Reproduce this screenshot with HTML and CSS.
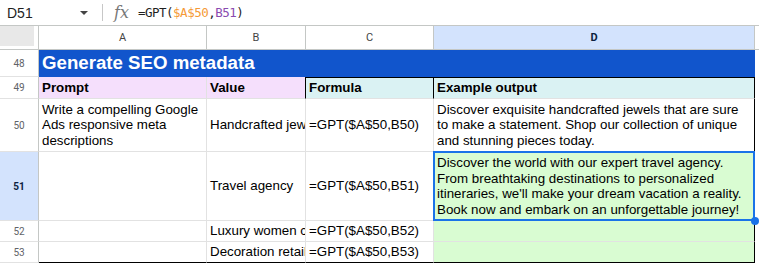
FILE: index.html
```html
<!DOCTYPE html>
<html lang="en">
<head>
    <meta charset="UTF-8">
    <meta name="viewport" content="width=device-width, initial-scale=1.0">
    <title>Generate SEO metadata</title>
    <link rel="stylesheet" href="styles.css">
</head>
<body>
    <div class="formula-bar">
        <div class="name-box">D51</div>
        <span class="dropdown"></span>
        <span class="divider"></span>
        <span class="fx">fx</span>
        <div class="formula">=GPT(<span class="ref-a">$A$50</span>,<span class="ref-b">B51</span>)</div>
    </div>

    <div class="sheet">
        <!-- column headers -->
        <div class="corner"><span></span></div>
        <div class="ch">A</div>
        <div class="ch">B</div>
        <div class="ch">C</div>
        <div class="ch active">D</div>
        <div class="ch filler"></div>

        <!-- 48 -->
        <div class="rh">48</div>
        <div class="cell title">Generate SEO metadata</div>
        <div class="cell filler"></div>

        <!-- 49 -->
        <div class="rh">49</div>
        <div class="cell head pink">Prompt</div>
        <div class="cell head pink edge-r">Value</div>
        <div class="cell head cyan top-line edge-r">Formula</div>
        <div class="cell head cyan top-line last">Example output</div>
        <div class="cell filler"></div>

        <!-- 50 -->
        <div class="rh">50</div>
        <div class="cell wrap">Write a compelling Google Ads responsive meta descriptions</div>
        <div class="cell">Handcrafted jewels</div>
        <div class="cell">=GPT($A$50,B50)</div>
        <div class="cell wrap last">Discover exquisite handcrafted jewels that are sure to make a statement. Shop our collection of unique and stunning pieces today.</div>
        <div class="cell filler"></div>

        <!-- 51 -->
        <div class="rh active">51</div>
        <div class="cell"></div>
        <div class="cell">Travel agency</div>
        <div class="cell">=GPT($A$50,B51)</div>
        <div class="cell wrap last green selected">
            Discover the world with our expert travel agency. From breathtaking destinations to personalized itineraries, we'll make your dream vacation a reality. Book now and embark on an unforgettable journey!
            <span class="selection"><span class="handle"></span></span>
        </div>
        <div class="cell filler"></div>

        <!-- 52 -->
        <div class="rh">52</div>
        <div class="cell"></div>
        <div class="cell">Luxury women clothing</div>
        <div class="cell">=GPT($A$50,B52)</div>
        <div class="cell last green"></div>
        <div class="cell filler"></div>

        <!-- 53 -->
        <div class="rh">53</div>
        <div class="cell bottom"></div>
        <div class="cell bottom">Decoration retail</div>
        <div class="cell bottom">=GPT($A$50,B53)</div>
        <div class="cell bottom last green"></div>
        <div class="cell filler"></div>
    </div>
</body>
</html>
```

FILE: styles.css
```css
body {
    margin: 0;
    background: #fff;
    font-family: "Liberation Sans", Arial, sans-serif;
    color: #000;
}
.formula-bar {
    display: flex;
    align-items: center;
    height: 25px;
    border-bottom: 1px solid #c4c7c5;
}
.name-box {
    width: 70px;
    padding-left: 7px;
    font-size: 14px;
    color: #1f1f1f;
}
.dropdown {
    width: 0;
    height: 0;
    margin-left: 3px;
    border-left: 4px solid transparent;
    border-right: 4px solid transparent;
    border-top: 4px solid #444;
}
.divider {
    width: 1px;
    height: 17px;
    margin-left: 14px;
    background: #c7c7c7;
}
.fx {
    margin-left: 11px;
    font-family: "DejaVu Serif", serif;
    font-style: italic;
    font-size: 16px;
    color: #777;
}
.formula {
    margin-left: 9px;
    font-family: "DejaVu Sans Mono", monospace;
    font-size: 12.5px;
    letter-spacing: -0.5px;
    color: #1f1f1f;
}
.ref-a { color: #f59a37; }
.ref-b { color: #8a4baf; }

.sheet {
    display: grid;
    grid-template-columns: 39px 168px 99px 128px 321px 1fr;
    grid-template-rows: 24px 27px 22px 53px 69px 21px 21px;
}
.sheet > div {
    box-sizing: border-box;
    border-right: 1px solid #e2e2e2;
    border-bottom: 1px solid #e2e2e2;
}
.corner {
    padding: 0 4px 3px 0;
    border-color: #c4c7c5 !important;
}
.corner span {
    display: block;
    height: 100%;
    background: #e8e8e8;
}
.ch {
    display: flex;
    align-items: center;
    justify-content: center;
    font-family: Roboto, "Liberation Sans", sans-serif;
    font-size: 11px;
    color: #444;
    border-color: #c4c7c5 !important;
}
.ch.filler { border-right: none !important; }
.ch.active {
    background: #d3e3fd;
    color: #0b1f3f;
    font-weight: bold;
}
.rh {
    display: flex;
    align-items: center;
    justify-content: center;
    font-family: Roboto, "Liberation Sans", sans-serif;
    font-size: 10px;
    color: #5f6368;
    border-right-color: #c4c7c5 !important;
}
.rh.active {
    background: #d3e3fd;
    color: #0b1f3f;
    font-weight: bold;
}
.cell {
    display: flex;
    align-items: center;
    padding: 0 3px;
    font-size: 13.33px;
    line-height: 15.5px;
    white-space: nowrap;
    overflow: hidden;
}
.cell.filler {
    border: none !important;
}
.cell.wrap {
    white-space: normal;
}
.title {
    grid-column: 2 / 6;
    background: #1155cc;
    border-color: #1155cc !important;
    color: #fff;
    font-size: 18.67px;
    font-weight: bold;
}
.head { font-weight: bold; }
.pink { background: #f5dffc; }
.cyan { background: #daf2f3; }
.green { background: #d9fcd2; }
.edge-r { border-right-color: #000 !important; }
.top-line { box-shadow: inset 0 1px 0 #000; }
.last { border-right-color: #000 !important; }
.bottom { border-bottom-color: #000 !important; }
.selected {
    position: relative;
    overflow: visible;
}
.selection {
    position: absolute;
    top: -1px;
    left: -1px;
    right: -1px;
    bottom: -1px;
    border: 2px solid #1a73e8;
}
.handle {
    position: absolute;
    right: -6px;
    bottom: -6px;
    width: 8px;
    height: 8px;
    border-radius: 50%;
    background: #1a73e8;
}
```
